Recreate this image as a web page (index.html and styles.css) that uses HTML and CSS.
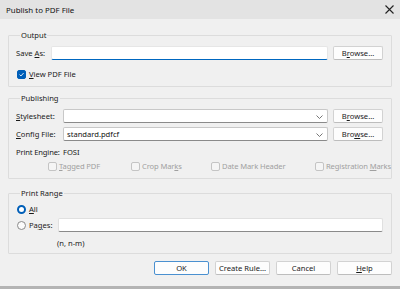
FILE: index.html
```html
<!DOCTYPE html>
<html>
<head>
<meta charset="utf-8">
<link rel="stylesheet" href="styles.css">
</head>
<body>
<div class="window">
  <div class="titlebar">
    <span class="title">Publish to PDF File</span>
    <svg class="close" width="9" height="9" viewBox="0 0 9 9"><path d="M0.5 0.5 L8.5 8.5 M8.5 0.5 L0.5 8.5" stroke="#222" stroke-width="1.1" fill="none"/></svg>
  </div>
  <div class="content">
    <fieldset class="group g-output">
      <legend>Output</legend>
      <div class="row">
        <span class="lbl lbl-save">Save <u>A</u>s:</span>
        <div class="input input-active"></div>
        <div class="btn">B<u>r</u>owse...</div>
      </div>
      <div class="row check-row">
        <span class="checkbox checked"><svg width="9" height="9" viewBox="0 0 9 9"><path d="M2 4.6 L3.8 6.4 L7.2 2.6" stroke="#fff" stroke-width="1.1" fill="none"/></svg></span>
        <span><u>V</u>iew PDF File</span>
      </div>
    </fieldset>

    <fieldset class="group g-pub">
      <legend>Publishing</legend>
      <div class="row">
        <span class="lbl lbl-pub"><u>S</u>tylesheet:</span>
        <div class="input select"><span></span><svg class="chev" width="7" height="4" viewBox="0 0 7 4"><path d="M0.5 0.5 L3.5 3.5 L6.5 0.5" stroke="#666" stroke-width="0.9" fill="none"/></svg></div>
        <div class="btn">B<u>r</u>owse...</div>
      </div>
      <div class="row">
        <span class="lbl lbl-pub"><u>C</u>onfig File:</span>
        <div class="input select"><span class="val">standard.pdfcf</span><svg class="chev" width="7" height="4" viewBox="0 0 7 4"><path d="M0.5 0.5 L3.5 3.5 L6.5 0.5" stroke="#666" stroke-width="0.9" fill="none"/></svg></div>
        <div class="btn">Bro<u>w</u>se...</div>
      </div>
      <div class="row engine-row">
        <span class="lbl lbl-pub lbl-engine">Print Engine:</span>
        <span>FOSI</span>
      </div>
      <div class="row opts">
        <span class="opt opt1"><span class="checkbox disabled"></span><span><u>T</u>agged PDF</span></span>
        <span class="opt opt2"><span class="checkbox disabled"></span><span>Crop Mar<u>k</u>s</span></span>
        <span class="opt opt3"><span class="checkbox disabled"></span><span>Date Mark Header</span></span>
        <span class="opt opt4"><span class="checkbox disabled"></span><span>Registration <u>M</u>arks</span></span>
      </div>
    </fieldset>

    <fieldset class="group g-range">
      <legend>Print Range</legend>
      <div class="row radio-row">
        <span class="radio on"></span><span><u>A</u>ll</span>
      </div>
      <div class="row radio-row">
        <span class="radio"></span><span class="lbl lbl-pages">Pa<u>g</u>es:</span>
        <div class="input input-pages"></div>
      </div>
      <div class="row hint-row">
        <span class="hint">(n, n-m)</span>
      </div>
    </fieldset>

    <div class="buttons">
      <div class="btn btn-wide default">OK</div>
      <div class="btn btn-wide">Create Rule...</div>
      <div class="btn btn-wide">Cancel</div>
      <div class="btn btn-wide"><u>H</u>elp</div>
    </div>
  </div>
  <div class="bottom-edge"></div>
</div>
</body>
</html>
```
FILE: styles.css
```css
* { box-sizing: border-box; }
html, body { margin: 0; padding: 0; }
body {
  width: 400px;
  height: 289px;
  overflow: hidden;
  background: #f0f0f0;
  font-family: "Noto Sans", "Open Sans", sans-serif;
  font-size: 7.6px;
  color: #1a1a1a;
  white-space: nowrap;
}
u { text-decoration: underline; text-underline-offset: 1px; text-decoration-thickness: 0.6px; }
.window { position: relative; height: 289px; display: flex; flex-direction: column; }
.titlebar {
  height: 19px;
  background: #e3e3e3;
  display: flex;
  align-items: center;
  justify-content: space-between;
  padding: 0 6px 0 6px;
  flex: none;
}
.title { font-size: 7.9px; color: #111; }
.content { padding: 11px 8px 0 8px; flex: 1; display: flex; flex-direction: column; }
.group {
  margin: 0;
  border: 1px solid #dcdcdc;
  border-radius: 1px;
  padding: 0 8px 0 7px;
  min-width: 0;
}
legend {
  padding: 0 1px;
  margin-left: 4px;
  line-height: 10px;
  height: 10px;
  color: #1a1a1a;
}
.row { display: flex; align-items: center; }
.lbl { flex: none; }
.lbl-save { width: 35px; }
.lbl-pub { width: 47px; }
.lbl-engine { letter-spacing: -0.15px; }
.input {
  height: 14px;
  background: #fff;
  border: 1px solid #c8c8c8;
  border-bottom-color: #8a8a8a;
  border-radius: 2px;
  flex: 1;
}
.input-active { border-color: #e6e6e6; border-bottom: 1.5px solid #0067c0; }
.select { display: flex; align-items: center; justify-content: space-between; padding: 0 4px 0 3px; }
.select .val { color: #111; }
.chev { margin-top: 1px; }
.btn {
  flex: none;
  height: 14px;
  width: 50px;
  margin-left: 5px;
  background: #fdfdfd;
  border: 1px solid #d2d2d2;
  border-bottom-color: #bdbdbd;
  border-radius: 2px;
  display: flex;
  align-items: center;
  justify-content: center;
  color: #1a1a1a;
}
.g-output legend + .row { margin-top: 6px; }
.check-row { margin-top: 9px; margin-bottom: 7px; padding-left: 1px; }
.checkbox {
  width: 9px; height: 9px;
  border: 1px solid #8a8a8a;
  border-radius: 2px;
  margin-right: 3px;
  display: inline-flex;
  align-items: center; justify-content: center;
  flex: none;
}
.checkbox.checked { background: #005fb8; border-color: #005fb8; }
.checkbox.disabled { border-color: #c4c4c4; background: #f5f5f5; }

.g-pub { margin-top: 6px; }
.g-pub legend + .row { margin-top: 6px; }
.g-pub .row + .row { margin-top: 4px; }
.g-pub .engine-row { margin-top: 4px; height: 14px; }
.opts { margin-top: 2px !important; margin-bottom: 7px; height: 10px; color: #a0a0a0; padding-left: 32px; letter-spacing: -0.12px; }
.opt { display: flex; align-items: center; flex: none; }
.opt1 { width: 83px; }
.opt2 { width: 80px; }
.opt3 { width: 104px; }
.opt .checkbox { margin-right: 2px; }

.g-range { margin-top: 9px; }
.g-range legend + .row { margin-top: 4px; }
.radio-row { height: 14px; padding-left: 1px; }
.radio-row + .radio-row { margin-top: 2px; }
.radio {
  width: 9px; height: 9px;
  border-radius: 50%;
  border: 1px solid #8a8a8a;
  background: #fbfbfb;
  margin-right: 3px;
  flex: none;
}
.radio.on { border: 2.5px solid #005fb8; background: #fff; }
.lbl-pages { width: 29px; }
.input-pages { border-color: #e0e0e0; border-bottom-color: #8a8a8a; }
.hint-row { margin-top: 6px; margin-bottom: 5px; padding-left: 41px; height: 10px; }
.buttons { display: flex; justify-content: flex-end; margin-top: 7px; gap: 6px; }
.btn-wide { width: 55px; margin-left: 0; }
.btn.default { border-color: #4a90d0; }
.bottom-edge { height: 3px; background: #b4b4b4; flex: none; }
```
